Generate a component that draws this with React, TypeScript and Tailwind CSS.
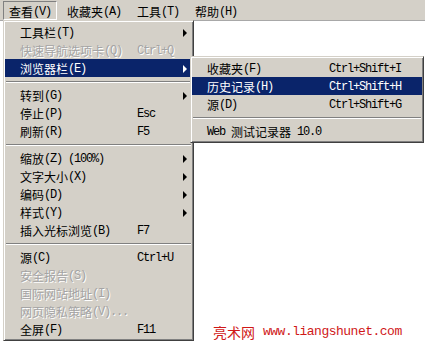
import React from "react";

type Item =
  | { kind: "sep" }
  | {
      kind?: "item";
      label: string;
      key?: string;
      arrow?: boolean;
      disabled?: boolean;
      active?: boolean;
    };

const viewMenu: Item[] = [
  { label: "工具栏(T)", arrow: true },
  { label: "快速导航选项卡(Q)", key: "Ctrl+Q", disabled: true },
  { label: "浏览器栏(E)", arrow: true, active: true },
  { kind: "sep" },
  { label: "转到(G)", arrow: true },
  { label: "停止(P)", key: "Esc" },
  { label: "刷新(R)", key: "F5" },
  { kind: "sep" },
  { label: "缩放(Z) (100%)", arrow: true },
  { label: "文字大小(X)", arrow: true },
  { label: "编码(D)", arrow: true },
  { label: "样式(Y)", arrow: true },
  { label: "插入光标浏览(B)", key: "F7" },
  { kind: "sep" },
  { label: "源(C)", key: "Ctrl+U" },
  { label: "安全报告(S)", disabled: true },
  { label: "国际网站地址(I)", disabled: true },
  { label: "网页隐私策略(V)...", disabled: true },
  { label: "全屏(F)", key: "F11" },
];

const barMenu: Item[] = [
  { label: "收藏夹(F)", key: "Ctrl+Shift+I" },
  { label: "历史记录(H)", key: "Ctrl+Shift+H", active: true },
  { label: "源(D)", key: "Ctrl+Shift+G" },
  { kind: "sep" },
  { label: "Web 测试记录器 10.0" },
];

// SimSun-ish: CJK full width, latin half width
function Txt({ text }: { text: string }) {
  const parts = text.split(/([\u3000-\u9fff\uff00-\uffef]+)/).filter(Boolean);
  return (
    <>
      {parts.map((p, i) =>
        /[\u3000-\u9fff]/.test(p) ? (
          <span key={i} className="font-['Noto_Sans_CJK_SC',sans-serif] text-[12px]">
            {p}
          </span>
        ) : (
          <span key={i} className="font-['Liberation_Mono',monospace] text-[12px] tracking-[-1.2px] whitespace-pre">
            {p}
          </span>
        )
      )}
    </>
  );
}

function Arrow({ white }: { white?: boolean }) {
  return (
    <div
      className={
        "h-0 w-0 border-y-[4px] border-y-transparent border-l-[4px] " +
        (white ? "border-l-white" : "border-l-black")
      }
    />
  );
}

function MenuPanel({
  items,
  labelWidth,
  padLeft,
}: {
  items: Item[];
  labelWidth: string;
  padLeft: string;
}) {
  return (
    <div className="flex flex-col border border-t-[#d4d0c8] border-l-[#d4d0c8] border-r-[#404040] border-b-[#404040] bg-[#d4d0c8] p-px shadow-[inset_1px_1px_#ffffff,inset_-1px_-1px_#808080]">
      <div className="flex flex-col py-px">
        {items.map((it, i) => {
          if (it.kind === "sep")
            return (
              <div key={i} className="flex h-[9px] items-center px-px">
                <div className="h-[2px] w-full border-t border-b border-t-[#808080] border-b-white" />
              </div>
            );
          const color = it.active
            ? "bg-[#0a246a] text-white"
            : it.disabled
            ? "text-[#a4a4a4] [text-shadow:1px_1px_0_#ffffff]"
            : "text-black";
          return (
            <div key={i} className={"flex h-[18px] items-center pr-[5px] pt-px leading-none " + color + " " + padLeft}>
              <div className={"flex shrink-0 items-center " + labelWidth}>
                <Txt text={it.label} />
              </div>
              <div className="flex flex-1 items-center">
                {it.key && <Txt text={it.key} />}
              </div>
              {it.arrow && <Arrow white={it.active} />}
            </div>
          );
        })}
      </div>
    </div>
  );
}

export default function App() {
  const bar = ["收藏夹(A)", "工具(T)", "帮助(H)"];
  return (
    <div className="relative h-[341px] w-[425px] overflow-hidden bg-white leading-none">
      <div className="flex h-[21px] items-center gap-[4px] border-b border-[#a8a8a8] bg-[#d4d0c8] pl-[3px]">
        <div className="flex h-[19px] items-center border border-t-[#808080] border-l-[#808080] border-r-white border-b-white px-[5px] pt-[3px]">
          <Txt text="查看(V)" />
        </div>
        {bar.map((b) => (
          <div key={b} className="flex h-[19px] items-center px-[6px] pt-[3px]">
            <Txt text={b} />
          </div>
        ))}
      </div>

      <div className="absolute left-[3px] top-[20px] w-[191px]">
        <MenuPanel items={viewMenu} labelWidth="w-[117px]" padLeft="pl-[15px]" />
      </div>

      <div className="absolute left-[190px] top-[56px] w-[234px]">
        <MenuPanel items={barMenu} labelWidth="w-[122px]" padLeft="pl-[15px]" />
      </div>

      <div className="absolute left-[213px] top-[323px] flex h-[18px] items-center gap-[8px] text-[#d01818]">
        <span className="font-['Noto_Sans_CJK_SC',sans-serif] text-[14px] leading-[18px]">亮术网</span>
        <span className="font-['Liberation_Mono',monospace] text-[13px] leading-[18px] tracking-[-0.5px]">www.liangshunet.com</span>
      </div>
    </div>
  );
}
